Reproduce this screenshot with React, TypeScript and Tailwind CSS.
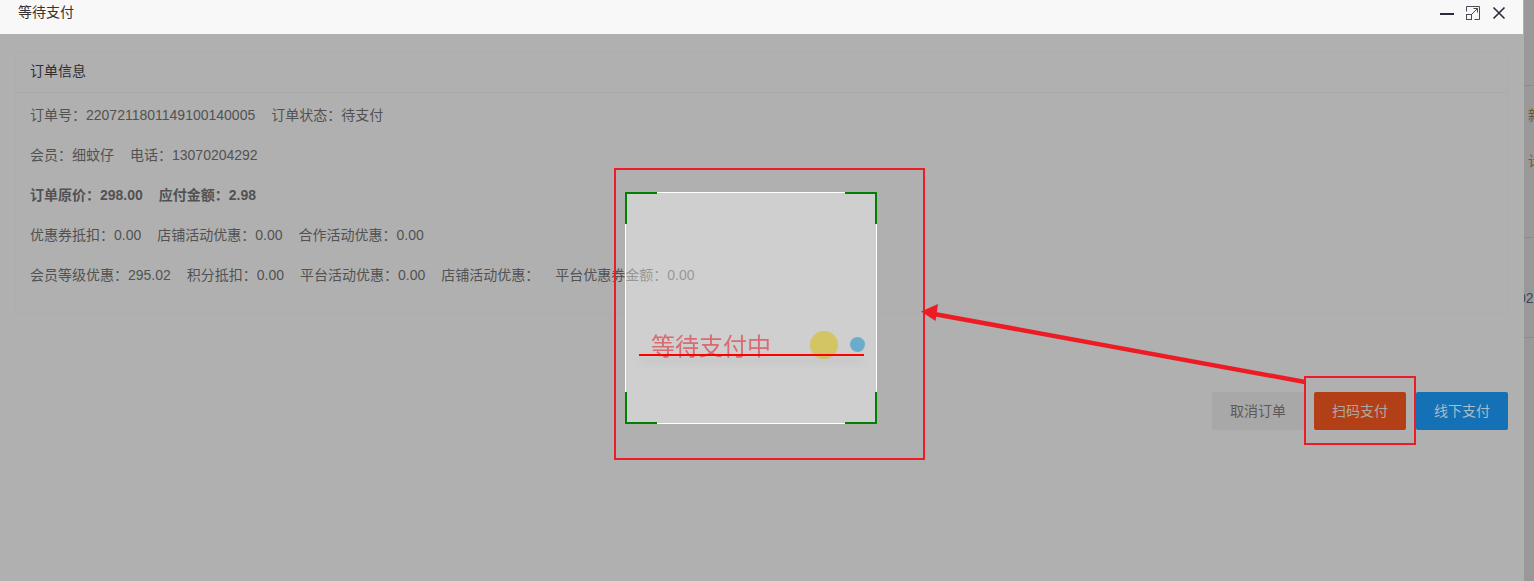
export default function App() {
  const font = { fontFamily: '"Liberation Sans", "Noto Sans CJK SC", sans-serif' };
  const rows = [
    { items: ['订单号：2207211801149100140005', '订单状态：待支付'] },
    { items: ['会员：细蚊仔', '电话：13070204292'] },
    { items: ['订单原价：298.00', '应付金额：2.98'], bold: true },
    { items: ['优惠券抵扣：0.00', '店铺活动优惠：0.00', '合作活动优惠：0.00'] },
    { items: ['会员等级优惠：295.02', '积分抵扣：0.00', '平台活动优惠：0.00', '店铺活动优惠：', '平台优惠券金额：0.00'] },
  ];
  return (
    <div style={font} className="relative flex h-[581px] w-[1534px] overflow-hidden bg-[#b0b0b0] text-[14px] text-[#525252]">
      <div className="flex w-[1524px] flex-col">
        <header className="flex h-[34px] w-[1523px] items-start justify-between bg-[#f8f8f8] pl-[18px] pr-[17px] text-[#333]">
          <span className="leading-[24px]">等待支付</span>
          <div className="flex items-center pt-[5px]">
            <svg className="mr-[10px]" width="16" height="16" viewBox="0 0 16 16" fill="none"><path d="M1 9h14" stroke="#2b2b3a" strokeWidth="2" /></svg>
            <svg className="mr-[11px]" width="16" height="16" viewBox="0 0 16 16" fill="none" stroke="#4a4a55" strokeWidth="1">
              <path d="M1.500 6.500V1.500h13v13h-5" />
              <rect x="1.500" y="9.500" width="5" height="5" />
              <path d="M7 9l5.500-5.500M8.500 3.500h4v4" />
            </svg>
            <svg width="14" height="16" viewBox="0 0 14 16" fill="none" stroke="#2b2b3a" strokeWidth="1.600"><path d="M1.500 2.500l11 11M12.500 2.500l-11 11" /></svg>
          </div>
        </header>
        <main className="flex flex-col px-[15px] pt-[17px]">
          <section className="h-[263px] w-[1493px] rounded-[2px] border border-[#adadad]">
            <h2 className="h-[41px] border-b border-[#aaaaaa] px-[14px] leading-[38px] text-[#2e2e2e]">订单信息</h2>
            <div className="px-[14px] pt-[2px]">
              {rows.map((r, i) => (
                <div key={i} className={`flex h-[40px] items-center gap-[16px] ${r.bold ? 'font-bold' : ''}`}>
                  {r.items.map((t) => (
                    <span key={t}>{t}</span>
                  ))}
                </div>
              ))}
            </div>
          </section>
          <div className="mt-[78px] flex w-[1493px] justify-end gap-[10px]">
            <button className="h-[38px] w-[92px] rounded-[2px] bg-[#a8a8a8] text-[#5a5a5a]">取消订单</button>
            <button className="h-[38px] w-[92px] rounded-[2px] bg-[#b33f17] text-[#b0a8a0]">扫码支付</button>
            <button className="h-[38px] w-[92px] rounded-[2px] bg-[#1571b5] text-[#a8bccb]">线下支付</button>
          </div>
        </main>
      </div>
      <aside className="flex w-[10px] flex-col overflow-hidden whitespace-nowrap bg-[#999999] leading-[16px] text-[#3f4656]">
        <div className="h-[86px] shrink-0 border-b border-[#8c8c8c]" />
        <div className="flex h-[152px] shrink-0 flex-col gap-[30px] border-b border-[#8c8c8c] pl-[4px] pt-[21px]">
          <span className="text-[#6d5a2c]">新</span>
          <span className="text-[#7d5a34]">计</span>
        </div>
        <div className="h-[100px] shrink-0 border-b border-[#8c8c8c] pt-[52px]">
          <span className="-ml-[6px] block">02</span>
        </div>
      </aside>

      {/* QR scan panel over the page */}
      <div className="absolute left-[625px] top-[192px] flex h-[232px] w-[252px] flex-col border border-white bg-white/40 pl-[25px] pr-[11px] pt-[137px]">
        <div className="absolute left-[-1px] top-[-1px] h-[32px] w-[32px] border-l-2 border-t-2 border-[#008000]" />
        <div className="absolute right-[-1px] top-[-1px] h-[32px] w-[32px] border-r-2 border-t-2 border-[#008000]" />
        <div className="absolute bottom-[-1px] left-[-1px] h-[32px] w-[32px] border-b-2 border-l-2 border-[#008000]" />
        <div className="absolute bottom-[-1px] right-[-1px] h-[32px] w-[32px] border-b-2 border-r-2 border-[#008000]" />
        <div className="flex h-[29px] items-center">
          <span className="mt-[3px] text-[24px] leading-[29px] text-[#d96b72] blur-[0.3px]">等待支付中</span>
          <div className="ml-auto h-[28px] w-[28px] rounded-full bg-[#d3c464]" />
          <div className="ml-[12px] h-[15px] w-[15px] rounded-full bg-[#6baccd]" />
        </div>
        <div className="absolute left-[13px] top-[161px] h-[2px] w-[225px] bg-[#ff0000] shadow-[0_6px_10px_rgba(0,0,0,0.12)]" />
      </div>

      {/* annotation marks */}
      <div className="absolute left-[614px] top-[168px] h-[292px] w-[311px] border-2 border-[#ed1c24]" />
      <div className="absolute left-[1304px] top-[376px] h-[69px] w-[112px] border-2 border-[#ed1c24]" />
      <svg className="absolute left-[0px] top-[0px]" width="1534" height="581" fill="none">
        <path d="M1305 382L934 314" stroke="#ed1c24" strokeWidth="4.500" />
        <path d="M921 311.500L938 304L935.500 321Z" fill="#ed1c24" />
      </svg>
    </div>
  );
}
